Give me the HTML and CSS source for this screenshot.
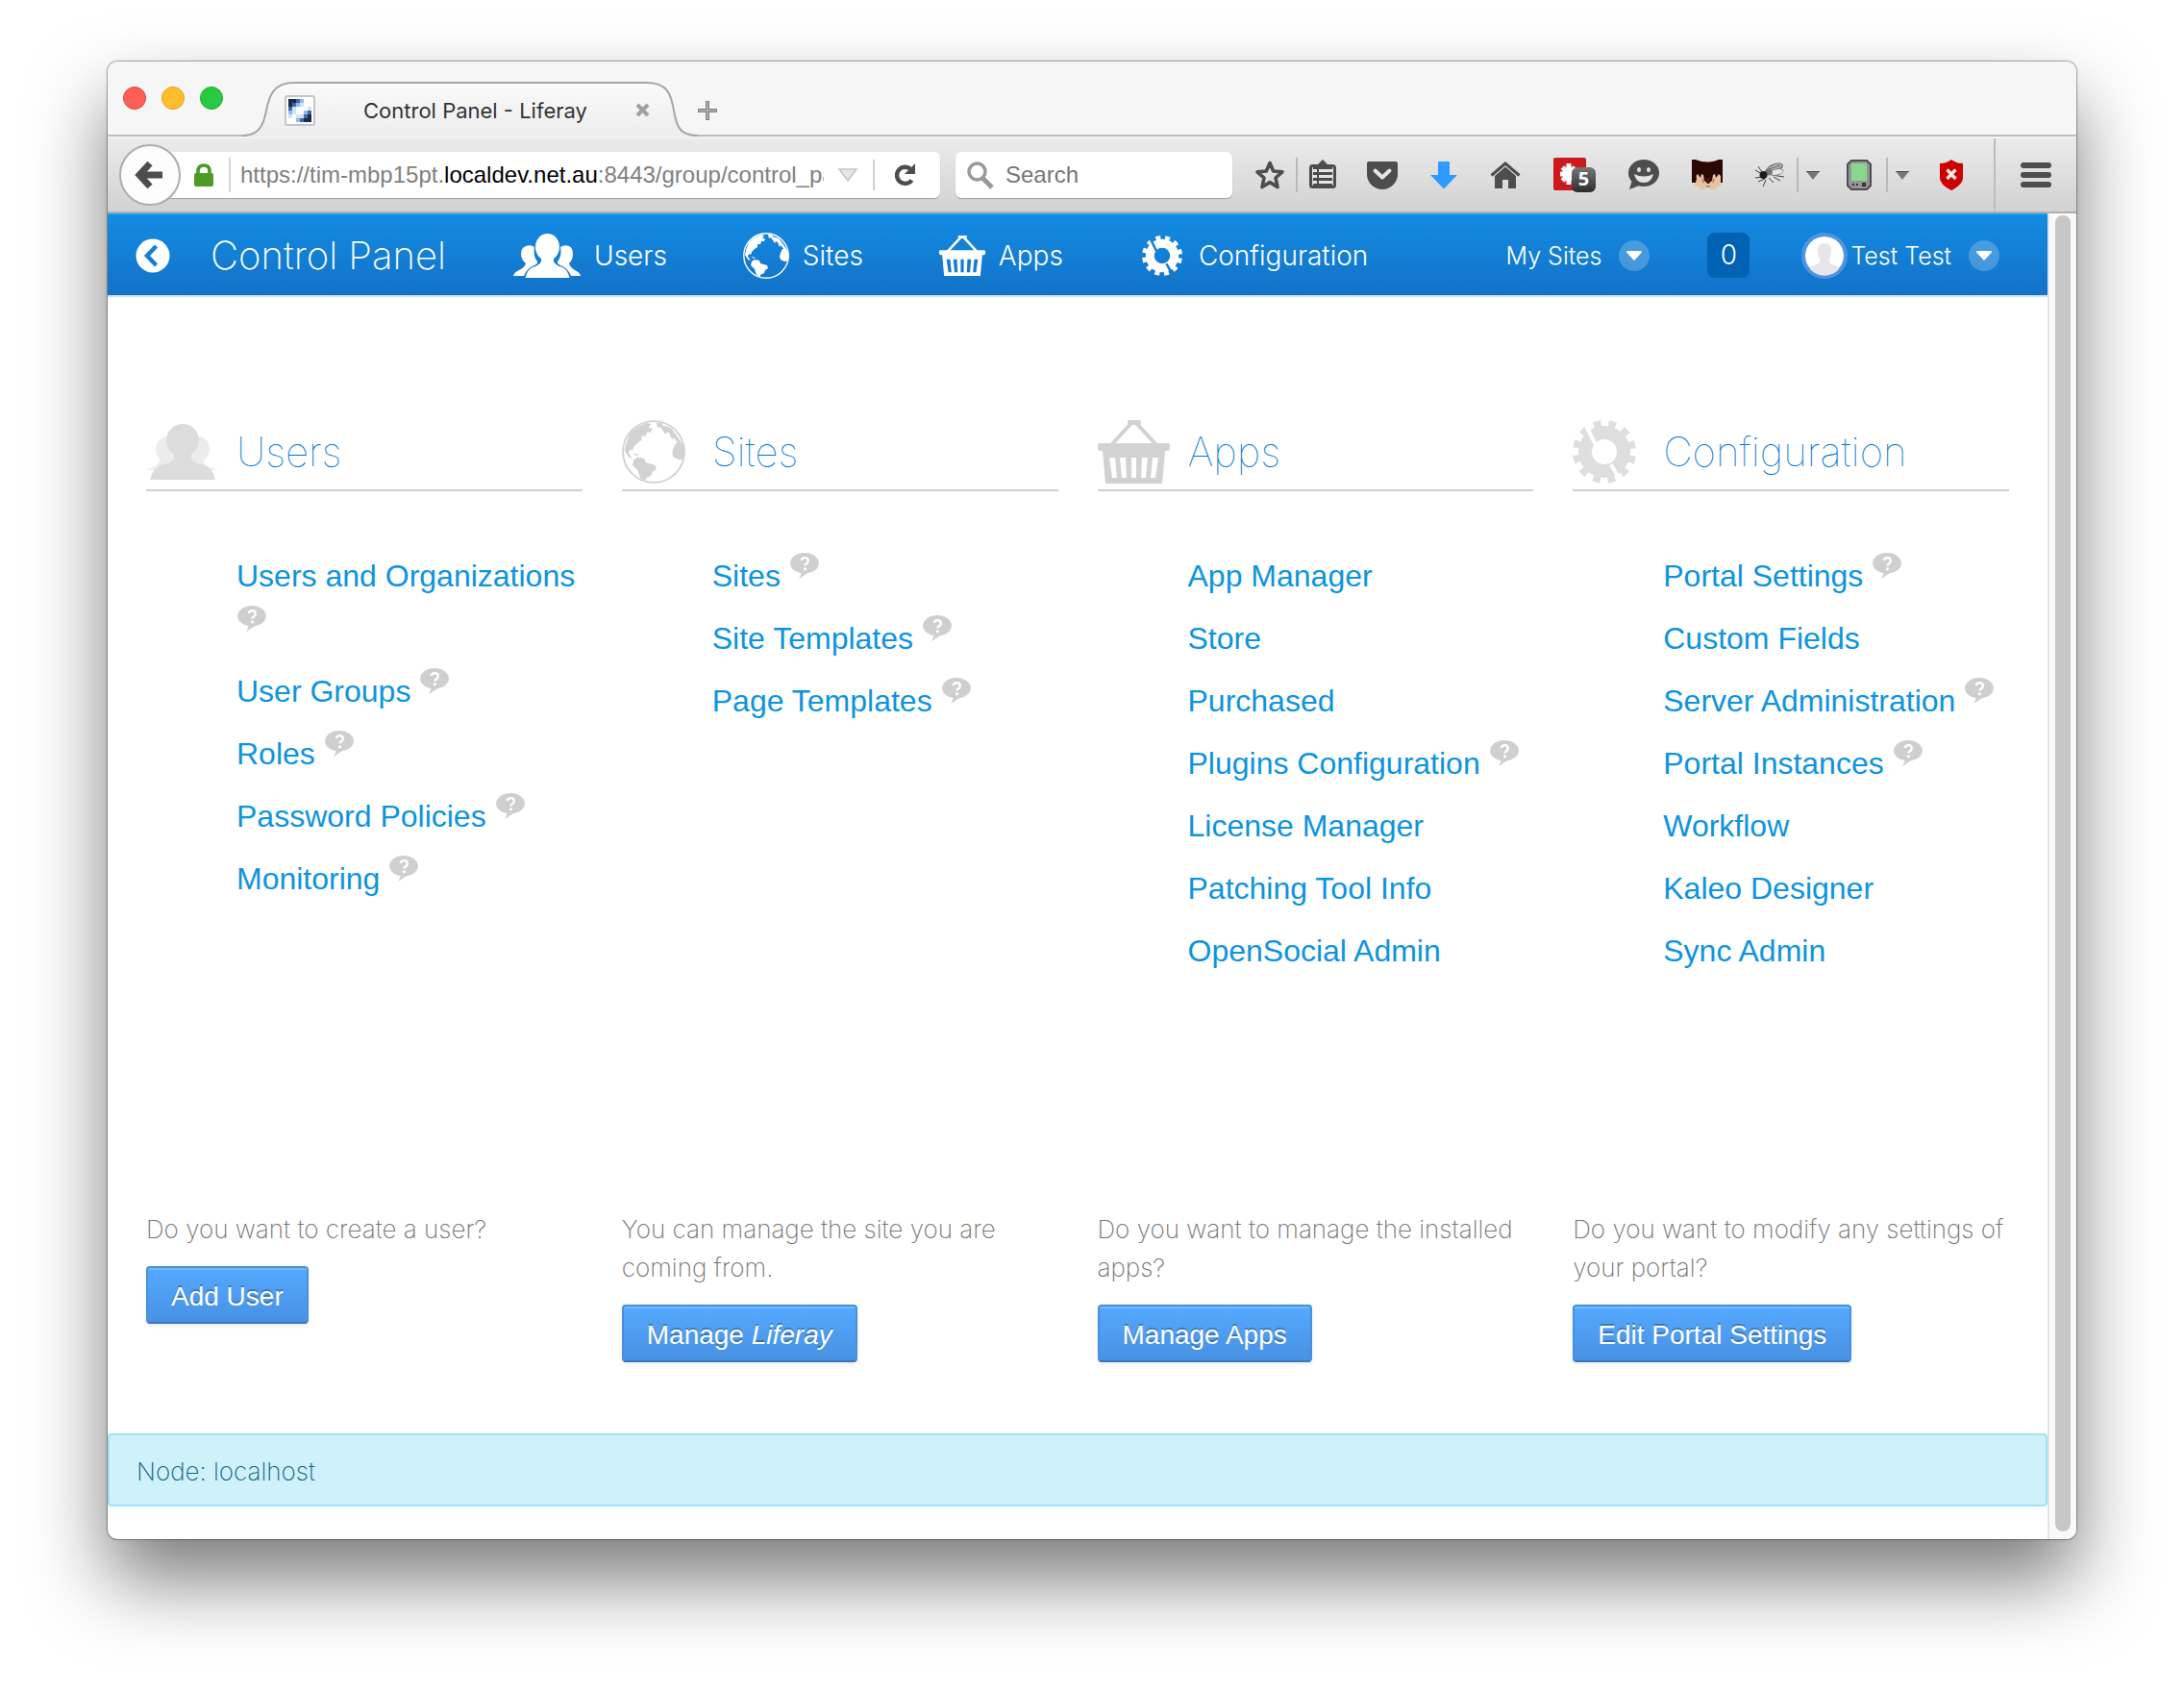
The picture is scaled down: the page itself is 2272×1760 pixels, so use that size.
FILE: index.html
```html
<!DOCTYPE html>
<html lang="en">
<head>
<meta charset="utf-8">
<title>Control Panel - Liferay</title>
<link rel="stylesheet" href="styles.css">
</head>
<body>
<svg class="defs" aria-hidden="true">
  <symbol id="globe" viewBox="0 0 48 48">
    <circle cx="24" cy="24" r="23.200" fill="none" stroke="currentColor" stroke-width="1.400"/>
    <path fill="currentColor" d="M3 18 6 10 12 5 19 2 22 3 20 6 23 6 22 9 19 9 18 12 15 12 15 15 12 17 9 20 8 23 6 22 5 25 8 29 5 28 2 23zM26 2 30 2 31 4 37 6 41 11 45 17 43 18 39 13 38 15 36 10 34 9 33 11 31 8 29 5 27 6zM39 21 41 17 45 17 48 22 47 29 43 30 39 28 38 25zM9 30 12 28 17 29 18 32 25 34 26 37 23 39 22 42 18 44 18 46 14 44 12 38 8 34zM8 25 13 26 11 27z"/>
  </symbol>
  <symbol id="basket" viewBox="0 0 75 66">
    <path fill="none" stroke="currentColor" stroke-width="4" d="M13 27 35 3M62 27 40 3"/>
    <rect x="31" width="14" height="5" rx="1" fill="currentColor"/>
    <path fill="currentColor" fill-rule="evenodd" d="M2 24H73Q75 24 75 26V29Q75 32 72 32H70L67 66H8L5 32H3Q0 32 0 29V26Q0 24 2 24zM12 39 15 60H20L18 39zM23 39 25 60H30L29 39zM35 39V60H40V39zM46 39 45 60H50L52 39zM57 39 55 60H60L63 39z"/>
  </symbol>
  <mask id="slit">
    <rect x="-1" y="-1" width="68" height="68" fill="#fff"/>
    <path d="M13 4 24 26M40 46 51 66" stroke="#000" stroke-width="4"/>
  </mask>
  <symbol id="gear" viewBox="0 0 66 66">
    <g fill="none" stroke="currentColor" mask="url(#slit)">
      <circle cx="33" cy="33" r="20" stroke-width="14"/>
      <circle cx="33" cy="33" r="29" stroke-width="8" stroke-dasharray="7.6 7.583" stroke-dashoffset="-4"/>
    </g>
  </symbol>
  <symbol id="help" viewBox="0 0 32 30">
    <ellipse cx="16" cy="11.500" rx="16" ry="11.500" fill="#cfcfcf"/>
    <path d="M13 21 10 29 20 22z" fill="#cfcfcf"/>
    <path d="M12.500 8.500Q13 5.500 16.500 5.500T20 9Q20 11 17.500 12.500Q16.500 13.200 16.500 14.500" fill="none" stroke="#fff" stroke-width="2.600"/>
    <circle cx="16.500" cy="18" r="1.700" fill="#fff"/>
  </symbol>
  <symbol id="caret" viewBox="0 0 14 9"><path d="M0 0H14L7 9z" fill="#777"/><path d="M0 0H14V1H0z" fill="#4c4c4c"/></symbol>
  <symbol id="drop" viewBox="0 0 32 32"><circle cx="16" cy="16" r="16" fill="#fff" fill-opacity=".22"/><path d="M8.500 11H23.500Q24.500 12 23.500 13L17 20Q16 21 15 20L8.500 13Q7.500 12 8.500 11z" fill="#fff"/></symbol>
</svg>

<div class="window">
  <header class="titlebar">
    <div class="lights">
      <button class="light light-close" aria-label="Close window"></button>
      <button class="light light-min" aria-label="Minimize window"></button>
      <button class="light light-zoom" aria-label="Zoom window"></button>
    </div>
    <div class="tab">
      <svg class="tab-shape" viewBox="0 0 474 57" preserveAspectRatio="none" aria-hidden="true">
        <defs><linearGradient id="tabfill" x2="0" y2="1"><stop stop-color="#fafafa"/><stop offset="1" stop-color="#ededed"/></linearGradient></defs>
        <path d="M0 57V56C18 56 22 45 25 30S32 1 54 1H420C442 1 446 12 449 30S456 56 474 56V57z" fill="url(#tabfill)"/>
        <path d="M0 56C18 56 22 45 25 30S32 1 54 1H420C442 1 446 12 449 30S456 56 474 56" fill="none" stroke="#a6a6a6" stroke-width="2"/>
      </svg>
      <svg class="favicon" viewBox="0 0 32 32" aria-hidden="true">
        <rect x="1" y="1" width="30" height="30" rx="2" fill="#fff" stroke="#c6c6c6" stroke-width="2"/>
        <path fill="#1b2a4e" d="M4 4h4v4h-4zM8 4h4v4h-4zM4 8h4v4h-4zM24 20h4v8h-4zM20 24h4v4h-4z"/>
        <path fill="#3f6ba5" d="M12 4h4v4h-4zM8 8h4v4h-4zM4 12h4v4h-4zM20 20h4v4h-4zM24 16h4v4h-4zM16 24h4v4h-4z"/>
        <path fill="#8fbbe6" d="M16 4h4v4h-4zM12 8h4v4h-4zM4 16h4v4h-4zM20 16h4v4h-4zM12 24h4v4h-4z"/>
        <path fill="#cfe4f6" d="M4 20h4v4h-4zM8 16h4v4h-4zM8 12h4v4h-4zM16 8h4v4h-4zM16 20h4v4h-4zM12 20h4v4h-4zM24 12h4v4h-4z"/>
      </svg>
      <span class="tab-title">Control Panel - Liferay</span>
      <button class="plain" aria-label="Close tab"><svg width="15" height="15" viewBox="0 0 15 15"><path d="M2 2 13 13M13 2 2 13" stroke="#a0a0a0" stroke-width="4"/></svg></button>
    </div>
    <button class="plain new-tab" aria-label="New tab"><svg width="20" height="20" viewBox="0 0 20 20"><path d="M10 0V20M0 10H20" stroke="#858585" stroke-width="4"/><path d="M10 1V19M1 10H19" stroke="#a9a9a9" stroke-width="2"/></svg></button>
  </header>

  <div class="toolbar">
    <button class="back" aria-label="Back"><svg width="30" height="30" viewBox="0 0 30 30"><path d="M15 3 4 15 15 27M5 15H28" fill="none" stroke="#4d4d4d" stroke-width="7"/></svg></button>
    <div class="urlbar">
      <svg width="20" height="24" viewBox="0 0 20 24" aria-hidden="true"><path d="M4 12V8Q4 2 10 2T16 8V12" fill="none" stroke="#4d9a26" stroke-width="3.600"/><rect y="10" width="20" height="14" rx="2" fill="#4d9a26"/></svg>
      <i class="sep sep-url"></i>
      <div class="url" role="textbox" aria-label="Address" contenteditable="true" spellcheck="false">https://tim-mbp15pt.<b>localdev.net.au</b>:8443/group/control_pa</div>
      <svg width="20" height="14" viewBox="0 0 20 14" aria-hidden="true"><path d="M1 1H19L10 13z" fill="#e6e6e6" stroke="#c2c2c2" stroke-width="1.500"/></svg>
      <i class="sep sep-reload"></i>
      <button class="plain" aria-label="Reload"><svg width="24" height="24" viewBox="0 0 24 24"><path d="M18.500 17.500A8.600 8.600 0 1 1 17.500 6" fill="none" stroke="#4d4d4d" stroke-width="4.400"/><path d="M22 0V11H11z" fill="#4d4d4d"/></svg></button>
    </div>
    <label class="search">
      <svg width="28" height="28" viewBox="0 0 28 28" aria-hidden="true"><circle cx="10.500" cy="10.500" r="8.500" fill="none" stroke="#999" stroke-width="3.500"/><path d="M16 17 26 27" stroke="#999" stroke-width="5"/></svg>
      <input type="text" placeholder="Search" aria-label="Search">
    </label>
    <button class="plain star" aria-label="Bookmark this page"><svg width="32" height="32" viewBox="0 0 32 32"><path d="M16 3.500 19.700 12 29 12.900 22 19 24 28.500 16 23.600 8 28.500 10 19 3 12.900 12.300 12z" fill="none" stroke="#4d4d4d" stroke-width="3.600" stroke-linejoin="round"/></svg></button>
    <i class="sep sep-star"></i>
    <div class="tools">
      <button class="plain" aria-label="Bookmarks"><svg width="32" height="32" viewBox="0 0 32 32"><path d="M12 6 18 0 24 6z" fill="#4d4d4d"/><rect x="5.500" y="6.500" width="25" height="22" rx="2" fill="none" stroke="#4d4d4d" stroke-width="3"/><path d="M8 8H28V27H8z" fill="#4d4d4d"/><path d="M8 11.500h4M14 11.500h14M8 17.500h4M14 17.500h14M8 23.500h4M14 23.500h14" stroke="#e6e6e6" stroke-width="3"/></svg></button>
      <button class="plain" aria-label="Pocket"><svg width="32" height="32" viewBox="0 0 32 32"><path d="M2 2H30Q32 2 32 4V15A16 16 0 0 1 0 15V4Q0 2 2 2z" fill="#4d4d4d"/><path d="M8.500 11.500 16 18.500 23.500 11.500" fill="none" stroke="#e4e4e4" stroke-width="4" stroke-linecap="round" stroke-linejoin="round"/></svg></button>
      <button class="plain" aria-label="Downloads"><svg width="32" height="32" viewBox="0 0 32 32"><path d="M11 2H21Q22 2 22 3V16H30L17 29.500Q16 30.500 15 29.500L2 16H10V3Q10 2 11 2z" fill="#2f9bff"/></svg></button>
      <button class="plain" aria-label="Home"><svg width="32" height="32" viewBox="0 0 32 32"><path d="M1.500 16.500 16 4 30.500 16.500" fill="none" stroke="#4d4d4d" stroke-width="3"/><path d="M16 7.500 27 17V30H19V21H13V30H5V17z" fill="#4d4d4d"/></svg></button>
      <button class="plain" aria-label="LastPass"><svg width="48" height="36" viewBox="0 0 48 36"><defs><linearGradient id="badge" x2="0" y2="1"><stop stop-color="#777"/><stop offset="1" stop-color="#2c2c2c"/></linearGradient></defs><rect x="2" width="34" height="34" rx="2" fill="#cb1a1c"/><path d="M18 6V28M9 17H27M11.500 10 24.500 24M24.500 10 11.500 24" stroke="#fff" stroke-width="5"/><rect x="21" y="10" width="25" height="26" rx="6" fill="url(#badge)"/><text x="33.500" y="29" text-anchor="middle" class="badge-text">5</text></svg></button>
      <button class="plain" aria-label="Chat"><svg width="32" height="32" viewBox="0 0 32 32"><ellipse cx="16" cy="14" rx="16" ry="14" fill="#4d4d4d"/><path d="M4 21 1 31 14 26z" fill="#4d4d4d"/><ellipse cx="11" cy="10.500" rx="2" ry="2.500" fill="#e4e4e4"/><ellipse cx="21" cy="10.500" rx="2" ry="2.500" fill="#e4e4e4"/><path d="M6 15Q16 20 26 15Q24 24 16 24T6 15z" fill="#e4e4e4"/></svg></button>
      <button class="plain" aria-label="Facepalm"><svg width="32" height="32" viewBox="0 0 32 32"><path d="M2 0H6Q18 5 30 0H34V24H2z" fill="#2c0805"/><path d="M7 20Q6 16 8 15L11 19 12 15 14 16 15 22 19 25 23 22 24 16 26 15 27 19 30 15 32 17 32 24 33 27 28 28 27 31H22L20 28H17L15 31H11L9 28 4 27 6 24z" fill="#e6c3a2"/><path d="M16 19H22L20 25H18z" fill="#43130c"/><path d="M13 20 14 24M25 20 24 24M17 28H21" stroke="#a8765a" stroke-width="1.500"/></svg></button>
      <button class="plain" aria-label="Firebug"><svg width="32" height="32" viewBox="0 0 32 32"><g transform="translate(3 3)"><path d="M1 8 8 12M1 16 8 15M4 20 11 17M9 25 12 18M20 21 15 16M31 15 18 13M4 4 8 10M27 19 20 15" fill="none" stroke="#444" stroke-width="1"/><ellipse cx="21" cy="6" rx="9" ry="4" fill="#b5b5b5" stroke="#6a6a6a" transform="rotate(-22 21 6)"/><path d="M15 7 27 3M18 9 29 5" stroke="#666"/><ellipse cx="23" cy="10" rx="7" ry="3" fill="#e9e9e9" stroke="#8a8a8a" transform="rotate(-12 23 10)"/><ellipse cx="15" cy="10" rx="4" ry="3.500" fill="#777"/><circle cx="9.500" cy="13" r="4" fill="#1c1c1c"/></g></svg></button>
    </div>
    <i class="sep sep-tool"></i>
    <button class="plain" aria-label="Firebug options"><svg width="14" height="9"><use href="#caret"/></svg></button>
    <button class="plain device" aria-label="Device"><svg width="26" height="32" viewBox="0 0 26 32"><path d="M5 1H21L25 5V27L21 31H5L1 27V5z" fill="#949494" stroke="#4e4e4e" stroke-width="2"/><rect x="5" y="4" width="16" height="18" fill="#86d88d"/><path d="M6 25h2v2h-2zM10 25h2v2h-2zM16 24h4v4h-4z" fill="#333"/></svg></button>
    <i class="sep sep-tool"></i>
    <button class="plain" aria-label="Device options"><svg width="14" height="9"><use href="#caret"/></svg></button>
    <button class="plain shield" aria-label="Blocker"><svg width="24" height="32" viewBox="0 0 24 32"><path d="M12 0Q17 4 24 4V19Q24 26 12 32Q0 26 0 19V4Q7 4 12 0z" fill="#cc0000"/><path d="M7.500 10.500 16.500 20M16.500 10.500 7.500 20" stroke="#f3e6e6" stroke-width="3.400"/></svg></button>
    <i class="sep sep-menu"></i>
    <button class="plain" aria-label="Menu"><svg width="32" height="26" viewBox="0 0 32 26"><path d="M3 3H29M3 13H29M3 23H29" stroke="#4d4d4d" stroke-width="6" stroke-linecap="round"/></svg></button>
  </div>

  <div class="viewport">
    <div class="page">
      <nav class="navbar">
        <a href="#" aria-label="Back to site"><svg width="36" height="36" viewBox="0 0 36 36"><circle cx="18" cy="18" r="17.500" fill="#fff"/><path d="M21.500 8 12 18 21.500 28" fill="none" stroke="#1480d6" stroke-width="4.500"/></svg></a>
        <h1 class="brand">Control Panel</h1>
        <div class="nav-items">
          <a class="nav-item" href="#users"><svg width="70" height="46" viewBox="0 0 70 46"><g fill="currentColor"><ellipse cx="35.500" cy="14" rx="12.500" ry="14"/><path d="M29 22H42V29Q44 33 51 35Q57 38 58.500 46H12.500Q14 38 20 35Q27 33 29 29z"/><path d="M22 14Q18 11 13 13Q8 15 8 21Q8 27 13 31Q12 35 6 38Q1 40 0 44H11Q14 36 22 33Q26 31 25 29Q20 23 22 14zM49 14Q53 11 58 13Q62 15 62 21Q62 27 58 31Q59 35 64 38Q69 40 70 44H60Q57 36 49 33Q45 31 46 29Q51 23 49 14z"/></g></svg>Users</a>
          <a class="nav-item" href="#sites"><svg width="48" height="48"><use href="#globe"/></svg>Sites</a>
          <a class="nav-item" href="#apps"><svg width="48" height="44"><use href="#basket"/></svg>Apps</a>
          <a class="nav-item" href="#configuration"><svg width="48" height="42"><use href="#gear"/></svg>Configuration</a>
        </div>
        <div class="nav-user">
          <button class="plain user-item">My Sites<svg width="32" height="32"><use href="#drop"/></svg></button>
          <a class="count" href="#">0</a>
          <button class="plain user-item"><span class="who"><svg class="avatar" viewBox="0 0 40 40"><circle cx="20" cy="20" r="20" fill="#fff"/><path d="M20 7C11 7 12 17 15 23Q16 28 12 29Q5 31 5 34A20 20 0 0 0 35 34Q35 31 28 29Q24 28 25 23C28 17 29 7 20 7z" fill="#e6e6e6"/></svg>Test Test</span><svg width="32" height="32"><use href="#drop"/></svg></button>
        </div>
      </nav>

      <main class="columns">
        <section class="column" id="users">
          <h2 class="heading"><svg width="74" height="58" viewBox="0 0 74 58"><g fill="#ececec"><ellipse cx="22" cy="26" rx="12" ry="13"/><ellipse cx="54" cy="26" rx="12" ry="13"/><path d="M14 34Q16 42 7 45Q1 47 0 48H74Q73 47 67 45Q58 42 60 34z"/></g><g fill="#dcdcdc"><ellipse cx="38" cy="17" rx="17" ry="17"/><path d="M29 26H47V36Q48 40 58 42Q69 45 72 58H4Q7 45 18 42Q28 40 29 36z"/></g></svg>Users</h2>
          <ul class="links">
            <li><a href="#">Users and Organizations</a> <svg class="help"><use href="#help"/></svg></li>
            <li><a href="#">User Groups</a> <svg class="help"><use href="#help"/></svg></li>
            <li><a href="#">Roles</a> <svg class="help"><use href="#help"/></svg></li>
            <li><a href="#">Password Policies</a> <svg class="help"><use href="#help"/></svg></li>
            <li><a href="#">Monitoring</a> <svg class="help"><use href="#help"/></svg></li>
          </ul>
          <div class="action"><p>Do you want to create a user?</p><button class="btn">Add User</button></div>
        </section>
        <section class="column" id="sites">
          <h2 class="heading"><svg width="66" height="66"><use href="#globe"/></svg>Sites</h2>
          <ul class="links">
            <li><a href="#">Sites</a> <svg class="help"><use href="#help"/></svg></li>
            <li><a href="#">Site Templates</a> <svg class="help"><use href="#help"/></svg></li>
            <li><a href="#">Page Templates</a> <svg class="help"><use href="#help"/></svg></li>
          </ul>
          <div class="action"><p>You can manage the site you are coming from.</p><button class="btn">Manage <em>Liferay</em></button></div>
        </section>
        <section class="column" id="apps">
          <h2 class="heading"><svg width="75" height="66"><use href="#basket"/></svg>Apps</h2>
          <ul class="links">
            <li><a href="#">App Manager</a></li>
            <li><a href="#">Store</a></li>
            <li><a href="#">Purchased</a></li>
            <li><a href="#">Plugins Configuration</a> <svg class="help"><use href="#help"/></svg></li>
            <li><a href="#">License Manager</a></li>
            <li><a href="#">Patching Tool Info</a></li>
            <li><a href="#">OpenSocial Admin</a></li>
          </ul>
          <div class="action"><p>Do you want to manage the installed apps?</p><button class="btn">Manage Apps</button></div>
        </section>
        <section class="column" id="configuration">
          <h2 class="heading"><svg class="pale" width="66" height="66"><use href="#gear"/></svg>Configuration</h2>
          <ul class="links">
            <li><a href="#">Portal Settings</a> <svg class="help"><use href="#help"/></svg></li>
            <li><a href="#">Custom Fields</a></li>
            <li><a href="#">Server Administration</a> <svg class="help"><use href="#help"/></svg></li>
            <li><a href="#">Portal Instances</a> <svg class="help"><use href="#help"/></svg></li>
            <li><a href="#">Workflow</a></li>
            <li><a href="#">Kaleo Designer</a></li>
            <li><a href="#">Sync Admin</a></li>
          </ul>
          <div class="action"><p>Do you want to modify any settings of your portal?</p><button class="btn">Edit Portal Settings</button></div>
        </section>
      </main>

      <p class="alert">Node: localhost</p>
    </div>
    <div class="scrollbar"><div class="thumb"></div></div>
  </div>
</div>
</body>
</html>
```
FILE: styles.css
```css
* { box-sizing: border-box; }

body {
  margin: 0;
  background: #fff;
  font-family: "Liberation Sans", Arial, sans-serif;
}

svg { display: block; flex: none; overflow: visible; }
.defs { position: absolute; width: 0; height: 0; }

.plain {
  display: flex;
  align-items: center;
  flex: none;
  padding: 0;
  border: 0;
  background: none;
  color: inherit;
  font: inherit;
}

/* Window frame */
.window {
  margin: 64px 112px 160px;
  border-radius: 10px;
  background: #fff;
  box-shadow: 0 0 0 1px rgba(0, 0, 0, .22), 0 0 3px rgba(0, 0, 0, .3), 0 42px 80px rgba(0, 0, 0, .52);
}

.titlebar {
  display: flex;
  align-items: flex-end;
  height: 78px;
  padding-left: 16px;
  border-bottom: 2px solid #bdbdbd;
  border-radius: 10px 10px 0 0;
  background: #f6f6f6;
}

.lights { display: flex; align-self: center; gap: 16px; margin-right: 20px; }
.light { width: 24px; height: 24px; padding: 0; border: 1px solid; border-radius: 50%; }
.light-close { background: #ff5f57; border-color: #e2463f; }
.light-min { background: #ffbd2e; border-color: #dfa023; }
.light-zoom { background: #28ca42; border-color: #1dad2b; }

.tab {
  position: relative;
  display: flex;
  align-items: center;
  width: 474px;
  height: 57px;
  margin-bottom: -2px;
  padding: 2px 50px 0 44px;
}
.tab > * { position: relative; }
.tab > .tab-shape { position: absolute; inset: 0; width: 100%; height: 100%; }
.favicon { width: 32px; height: 32px; }
.tab-title {
  flex: 1;
  color: #333;
  font: 22px/28px Inter, sans-serif;
  text-align: center;
}
.new-tab { margin-bottom: 15px; }

/* Toolbar */
.toolbar {
  display: flex;
  align-items: center;
  height: 80px;
  padding: 0 26px 0 12px;
  border-bottom: 2px solid #b0b0b0;
  border-top: 2px solid #f3f3f3;
  background: linear-gradient(#ebebeb, #d2d2d2);
}

.back {
  position: relative;
  z-index: 1;
  display: flex;
  align-items: center;
  justify-content: center;
  flex: none;
  width: 64px;
  height: 64px;
  padding: 0;
  border: 2px solid #adadad;
  border-radius: 50%;
  background: #fcfcfc;
}

.urlbar, .search {
  display: flex;
  align-items: center;
  height: 48px;
  border-radius: 6px;
  background: #fff;
  box-shadow: 0 1px 1px #a0a0a0;
  font-size: 24px;
  line-height: 32px;
}
.urlbar { flex: 1; min-width: 0; margin-left: -16px; padding: 0 24px 0 30px; }
.url {
  flex: 1;
  min-width: 0;
  overflow: hidden;
  color: #808080;
  white-space: nowrap;
}
.url b { color: #000; font-weight: 400; }

.search { flex: none; width: 288px; margin-left: 16px; padding: 0 12px; gap: 12px; }
.search input {
  flex: 1;
  min-width: 0;
  padding: 0;
  border: 0;
  background: none;
  font: inherit;
}
.search input::placeholder { color: #757575; opacity: 1; }

.sep { flex: none; width: 2px; height: 36px; background: #b9b9b9; }
.sep-url { margin: 0 10px 0 16px; background: #d6d6d6; }
.sep-reload { height: 32px; margin: 0 20px 0 16px; background: #d0d0d0; }
.sep-url + .url { margin-right: 15px; }
.star { margin-left: 23px; }
.sep-star { margin: 0 8px 0 11px; }
.sep-tool { margin: 0 8px 0 15px; }
.sep-menu { height: 100%; margin: 0 26px 0 32px; background: #bcbcbc; }
.tools { display: flex; align-items: center; gap: 32px; }
.badge-text { font: 700 20px "Open Sans", sans-serif; fill: #fff; }
.device { margin-left: 28px; }
.shield { margin-left: 32px; }

/* Page area */
.viewport { display: flex; }
.page { flex: 1; min-width: 0; }

.scrollbar {
  width: 30px;
  padding: 2px 6px 8px;
  border-left: 2px solid #e4e4e4;
  border-bottom-right-radius: 10px;
  background: #f9f9f9;
}
.thumb { width: 16px; height: 100%; border-radius: 8px; background: #c7c7c7; }

.navbar {
  display: flex;
  align-items: center;
  height: 87px;
  padding: 0 50px 0 29px;
  border-top: 2px solid #0aa2ee;
  border-bottom: 2px solid #cfe2f2;
  background: linear-gradient(#138be1, #1272c8) padding-box;
  color: #fff;
  font: 300 28px/36px Inter, sans-serif;
}
.navbar a { color: inherit; text-decoration: none; }
.brand { margin: 0 70px 0 42px; font-size: 40px; font-weight: 200; line-height: 48px; }
.nav-items { display: flex; align-items: center; gap: 79px; }
.nav-item { display: flex; align-items: center; gap: 14px; }
.nav-user { display: flex; align-items: center; margin-left: auto; }
.user-item { gap: 18px; font-size: 25px; }
.who { display: flex; align-items: center; gap: 3px; }
.count {
  width: 44px;
  height: 47px;
  margin: 0 54px 0 60px;
  border-radius: 8px;
  background: #0062b3;
  line-height: 47px;
  text-align: center;
}
.avatar { width: 48px; height: 48px; border: 4px solid #4f93e3; border-radius: 50%; }

.columns {
  display: grid;
  grid-template-columns: repeat(4, minmax(0, 1fr));
  grid-template-rows: auto auto auto;
  column-gap: 41px;
  padding: 122px 40px 74px;
}
.column {
  display: grid;
  grid-row: span 3;
  grid-template-rows: subgrid;
}

.heading {
  display: grid;
  grid-template-columns: 94px 1fr;
  align-items: center;
  height: 80px;
  margin: 0 0 61px;
  border-bottom: 2px solid #d0d0d0;
  color: #0078d0;
  font: 100 42px/56px Inter, sans-serif;
}
.heading svg { color: #d2d2d2; }
.heading .pale { color: #dedede; }

.links {
  margin: 0;
  padding: 0 0 232px 94px;
  list-style: none;
  font-size: 32px;
  line-height: 55px;
}
.links li { margin-bottom: 10px; }
.links a { color: #0d94de; text-decoration: none; }
.help { display: inline-block; width: 32px; height: 28px; vertical-align: 7px; }

.action {
  color: #757575;
  font: 200 26px/40px Inter, sans-serif;
}
.action p { margin: 0 0 18px; }

.btn {
  height: 60px;
  padding: 3px 24px 0;
  border: 2px solid #4690dc;
  border-bottom-color: #3a76b8;
  border-radius: 4px;
  background: linear-gradient(#55a9ff, #4891e3);
  box-shadow: inset 0 2px #72b8ff, 0 2px 4px rgba(0, 0, 0, .08);
  color: #fff;
  font: 28px/36px "Liberation Sans", Arial, sans-serif;
  text-shadow: 0 -2px rgba(0, 0, 0, .25);
}

.alert {
  margin: 0 0 34px;
  padding: 18px 28px 14px;
  border: 2px solid #a3e1f5;
  border-radius: 4px;
  background: #cef1fb;
  color: #0f6382;
  font: 200 26px/40px Inter, sans-serif;
}
```
